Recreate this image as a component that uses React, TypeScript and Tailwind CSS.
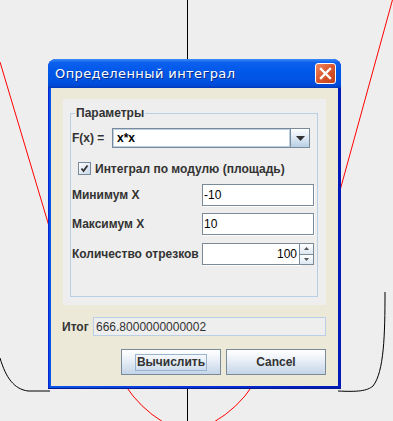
import React from 'react'

const labelFont = "font-['Liberation_Sans',Arial,sans-serif]"

const Field = ({ value, right }: { value: string; right?: boolean }) => (
  <div
    className={`h-[22px] flex-1 border border-[#7A8A99] bg-white shadow-[inset_-1px_-1px_0_#fff,1px_1px_0_#fff] flex items-center px-[1px] text-[12px] text-black ${
      right ? 'justify-end pr-[2px]' : ''
    }`}
  >
    {value}
  </div>
)

export default function App() {
  return (
    <div className={`relative w-[393px] h-[421px] overflow-hidden bg-[#EEEEEE] ${labelFont}`}>
      {/* graph drawn on the canvas behind the dialog */}
      <svg className="absolute inset-0" width="393" height="421" viewBox="0 0 393 421">
        <line x1="187.5" y1="0" x2="187.5" y2="421" stroke="#000" strokeWidth="1" />
        <path d="M0 62 L60 263" stroke="#ff0000" strokeWidth="1" fill="none" />
        <path d="M393 -2 L336 205" stroke="#ff0000" strokeWidth="1" fill="none" />
        <path d="M125 385 Q140 408 163 422" stroke="#ff0000" strokeWidth="1" fill="none" />
        <path d="M253 385 Q238 408 214 422" stroke="#ff0000" strokeWidth="1" fill="none" />
        <path d="M0 358 C6 378 14 389 28 391 L50 391" stroke="#000" strokeWidth="1" fill="none" />
        <path d="M385 292 C385 335 384 372 373 386 C367 391 358 392 338 391" stroke="#000" strokeWidth="1" fill="none" />
      </svg>

      {/* dialog window */}
      <div className="absolute left-[48px] top-[59px] w-[293px] h-[330px] flex flex-col rounded-t-[8px] bg-[linear-gradient(to_right,#0019CF,#0A55E8_2px,#0831D9_50%,#0019B8)] shadow-[inset_0_-1px_0_#001A8C]">
        {/* title bar */}
        <div className="h-[29px] flex items-center pl-[7px] pr-[5px] rounded-t-[8px] bg-[linear-gradient(to_bottom,#3C8CF6_0%,#0D60EE_12%,#0058E9_40%,#0054E3_70%,#0049D6_92%,#0037B6_100%)]">
          <span className="flex-1 text-white text-[13px] tracking-[0.4px] font-['DejaVu_Sans',sans-serif] [text-shadow:1px_1px_0_#0A2E8C]">
            Определенный интеграл
          </span>
          <div className="w-[21px] h-[21px] rounded-[3px] border border-white bg-[linear-gradient(135deg,#F08A64,#DC5A30_45%,#C2401A)] flex items-center justify-center">
            <svg width="13" height="13" viewBox="0 0 13 13">
              <path d="M2 2 L11 11 M11 2 L2 11" stroke="#fff" strokeWidth="2.4" strokeLinecap="square" />
            </svg>
          </div>
        </div>

        {/* body */}
        <div className="flex-1 mx-[3px] mb-[3px] bg-[#ECE9D8] flex flex-col">
          {/* inner panel */}
          <div className="mt-[11px] mx-[12px] h-[206px] bg-[#EEEEEE] pt-[14px] pl-[7px] pr-[8px] pb-[8px] flex">
            <div className="relative flex-1 border border-[#B8CFE5] flex flex-col pl-[1px] pr-[3px]">
              <span className="absolute left-[4px] -top-[8px] bg-[#EEEEEE] px-[1px] text-[12px] leading-[14px] font-bold text-[#333333]">
                Параметры
              </span>

              {/* F(x) row */}
              <div className="mt-[14px] flex items-center h-[20px]">
                <span className="w-[40px] text-[12px] font-bold text-[#333333]">F(x) =</span>
                <div className="w-[198px] h-[20px] border border-[#7A8A99] bg-white flex">
                  <div className="flex-1 flex items-center pl-[3px] text-[12px] font-bold text-black border border-[#B8CFE5]">
                    x*x
                  </div>
                  <div className="w-[19px] border-l border-[#7A8A99] bg-[linear-gradient(to_bottom,#ffffff,#DDE8F3_50%,#B8CFE5)] flex items-center justify-center">
                    <svg width="9" height="5" viewBox="0 0 9 5">
                      <path d="M0 0 L9 0 L4.5 5 Z" fill="#333" />
                    </svg>
                  </div>
                </div>
              </div>

              {/* checkbox */}
              <div className="mt-[14px] flex items-center h-[13px] pl-[6px]">
                <div className="w-[13px] h-[13px] border border-[#7A8A99] bg-[linear-gradient(135deg,#ffffff,#C8D8EA)] flex items-center justify-center">
                  <svg width="9" height="9" viewBox="0 0 9 9">
                    <path d="M1.5 4.5 L3.5 7 L7.5 1.5" stroke="#333" strokeWidth="1.8" fill="none" />
                  </svg>
                </div>
                <span className="ml-[4px] text-[12px] font-bold text-[#333333]">Интеграл по модулю (площадь)</span>
              </div>

              {/* min */}
              <div className="mt-[9px] flex items-center">
                <span className="w-[130px] text-[12px] font-bold text-[#333333]">Минимум X</span>
                <Field value="-10" />
              </div>
              {/* max */}
              <div className="mt-[7px] flex items-center">
                <span className="w-[130px] text-[12px] font-bold text-[#333333]">Максимум X</span>
                <Field value="10" />
              </div>
              {/* spinner */}
              <div className="mt-[8px] flex items-center">
                <span className="w-[130px] text-[12px] font-bold text-[#333333]">Количество отрезков</span>
                <div className="flex-1 flex h-[22px]">
                  <Field value="100" right />
                  <div className="w-[14px] flex flex-col border border-l-0 border-[#7A8A99]">
                    <div className="flex-1 border-b border-[#7A8A99] bg-[linear-gradient(to_bottom,#ffffff,#DDE8F3)] flex items-center justify-center">
                      <svg width="5" height="3" viewBox="0 0 5 3">
                        <path d="M0 3 L5 3 L2.5 0 Z" fill="#555" />
                      </svg>
                    </div>
                    <div className="flex-1 bg-[linear-gradient(to_bottom,#ffffff,#DDE8F3)] flex items-center justify-center">
                      <svg width="5" height="3" viewBox="0 0 5 3">
                        <path d="M0 0 L5 0 L2.5 3 Z" fill="#555" />
                      </svg>
                    </div>
                  </div>
                </div>
              </div>
            </div>
          </div>

          {/* result */}
          <div className="mt-[12px] pl-[11px] pr-[12px] flex items-center h-[19px]">
            <span className="w-[31px] text-[12px] font-bold text-[#333333]">Итог</span>
            <div className="flex-1 h-[19px] border border-[#B8CFE5] bg-[#EEEEEE] flex items-center pl-[2px] text-[12px] text-[#333333]">
              666.8000000000002
            </div>
          </div>

          {/* buttons */}
          <div className="mt-[13px] pr-[12px] flex justify-end gap-[5px]">
            <button className="w-[100px] h-[26px] border border-[#7A8A99] bg-[linear-gradient(to_bottom,#ffffff,#EEF3F9_35%,#C4D5E8)] flex items-center justify-center">
              <span className="px-[1px] border border-[#99B4D1] text-[12px] leading-[15px] font-bold text-[#333333]">
                Вычислить
              </span>
            </button>
            <button className="w-[100px] h-[26px] border border-[#7A8A99] bg-[linear-gradient(to_bottom,#ffffff,#EEF3F9_35%,#C4D5E8)] text-[12px] font-bold text-[#333333]">
              Cancel
            </button>
          </div>
        </div>
      </div>
    </div>
  )
}
